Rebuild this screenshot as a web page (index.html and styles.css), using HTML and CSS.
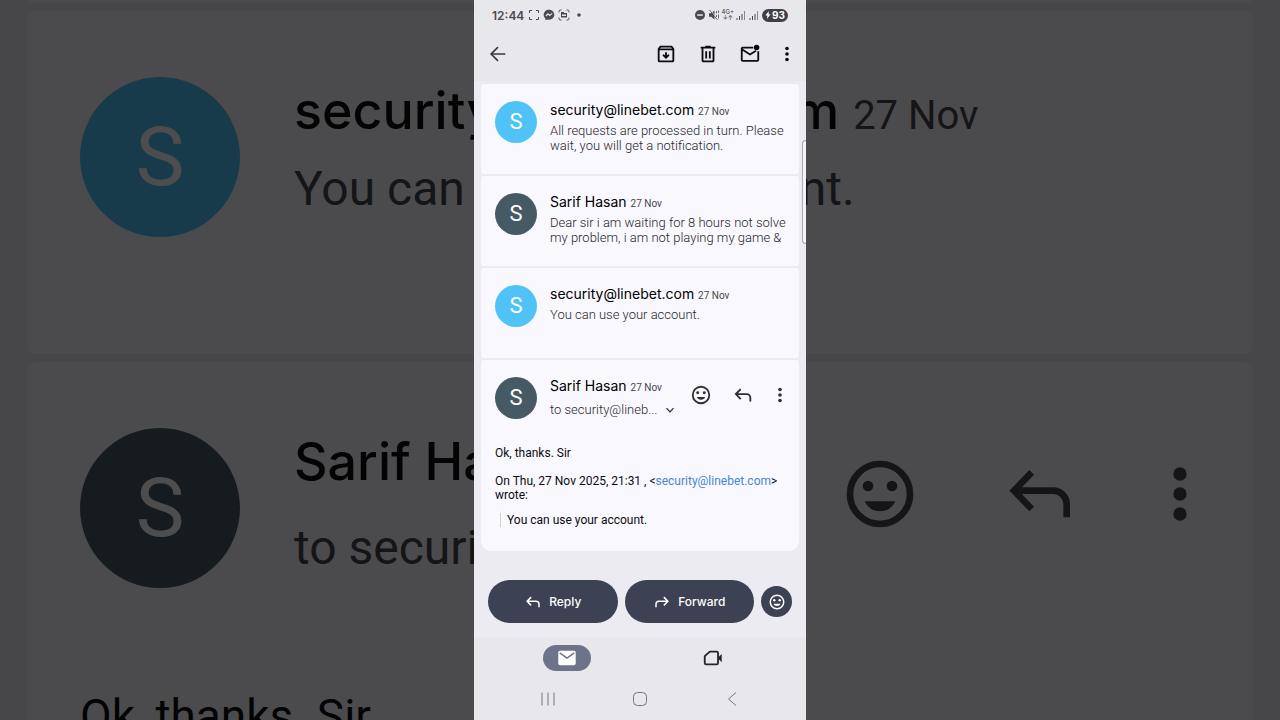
FILE: index.html
```html
<!DOCTYPE html>
<html lang="en">
<head>
  <meta charset="UTF-8" />
  <meta name="viewport" content="width=device-width, initial-scale=1.0" />
  <title>Mail | Conversation</title>
  <link rel="stylesheet" href="styles.css">
</head>

<body>
  <!-- shared icons -->
  <svg class="icon-defs" aria-hidden="true">
    <symbol id="icon-smile" viewBox="0 0 24 24">
      <circle cx="12" cy="12" r="9" fill="none" stroke="currentColor" stroke-width="2" />
      <circle cx="8.4" cy="9.6" r="1.6" />
      <circle cx="15.6" cy="9.6" r="1.6" />
      <path d="M7.4 14.2h9.200c-.8 1.900-2.500 3-4.600 3s-3.800-1.100-4.600-3z" />
    </symbol>
    <symbol id="icon-reply" viewBox="0 0 24 24">
      <path d="M9.500 5.500 4.200 11l5.300 5.500M4.500 11H16a4 4 0 0 1 4 4v4" fill="none" stroke="currentColor" stroke-width="2" />
    </symbol>
    <symbol id="icon-more" viewBox="0 0 12 24">
      <circle cx="6" cy="6" r="2" />
      <circle cx="6" cy="12" r="2" />
      <circle cx="6" cy="18" r="2" />
    </symbol>
    <symbol id="icon-signal" viewBox="0 0 10 10">
      <path d="M0 8h1v2H0zM2.500 6h1v4h-1zM5 4h1v6H5z" />
      <path d="M7.500 1h1v9h-1z" opacity=".6" />
    </symbol>
  </svg>

  <div class="backdrop" aria-hidden="true">
    <div class="big-card big-card-cut"></div>
    <div class="big-card">
      <div class="big-avatar sky">S</div>
      <div class="big-text">
        <div class="big-name">security@linebet.com <span class="big-date">27 Nov</span></div>
        <div class="big-snippet">You can use your account.</div>
      </div>
    </div>
    <div class="big-card big-card-open">
      <div class="big-avatar slate">S</div>
      <div class="big-text">
        <div class="big-name">Sarif Hasan</div>
        <div class="big-snippet big-to">to security@lineb...</div>
      </div>
      <div class="big-actions">
        <svg class="big-icon"><use href="#icon-smile" /></svg>
        <svg class="big-icon"><use href="#icon-reply" /></svg>
        <svg class="big-icon big-more"><use href="#icon-more" /></svg>
      </div>
      <div class="big-body">Ok, thanks. Sir</div>
    </div>
  </div>

  <div class="phone">
    <header class="top">
      <div class="status-bar">
        <span class="clock">12:44</span>
        <svg class="status-icon" viewBox="0 0 12 12">
          <path d="M1.500 4V1.500H4M8 1.500h2.500V4M10.500 8v2.500H8M4 10.500H1.500V8" fill="none" stroke="currentColor" stroke-width="1" />
        </svg>
        <svg class="status-icon" viewBox="0 0 12 12">
          <path d="M6 .8C3 .8.700 2.900.700 5.800c0 1.600.600 2.800 1.700 3.700v1.800l1.700-.9c.6.200 1.200.3 1.900.3 3 0 5.300-2.100 5.300-4.900S9 .8 6 .8z" />
          <path d="M2.800 7.200 5 4.900l1.700 1.500 2.500-2" fill="none" stroke="#e8e7ec" stroke-width="1.200" />
        </svg>
        <svg class="status-icon" viewBox="0 0 12 12">
          <path d="M1 3.500V2.500A1.500 1.500 0 0 1 2.500 1h1M8.500 1h1A1.500 1.500 0 0 1 11 2.500v1M11 8.500v1A1.500 1.500 0 0 1 9.500 11h-1M3.500 11h-1A1.500 1.500 0 0 1 1 9.500v-1" fill="none" stroke="currentColor" />
          <path d="M3 4h6v4.500H3zM3 3h3v1H3z" />
          <path d="M4 5.500h4v1.500H4z" fill="#e8e7ec" />
        </svg>
        <svg class="status-icon" viewBox="0 0 12 12"><circle cx="6" cy="6" r="1.800" /></svg>

        <div class="status-right">
          <svg class="status-icon" viewBox="0 0 12 12">
            <circle cx="6" cy="6" r="5" />
            <path d="M3.200 5.300h5.600v1.500H3.200z" fill="#e8e7ec" />
          </svg>
          <svg class="status-icon" viewBox="0 0 12 12">
            <path d="M1 4.200h2L6.500 1.500v9L3 7.800H1z" />
            <path d="M2.200 1l8 10" stroke="#e8e7ec" />
            <path d="M1.500 1l8 10M8.500 2v2.500M8.500 6v2M10.500 1.500V4M10.500 5.500v4" fill="none" stroke="currentColor" stroke-width=".8" />
          </svg>
          <span class="network">4G+<span class="arrows">↓↑</span></span>
          <svg class="signal"><use href="#icon-signal" /></svg>
          <svg class="signal"><use href="#icon-signal" /></svg>
          <span class="battery">
            <svg class="bolt" viewBox="0 0 6 8"><path d="M3.800 0 .4 4.600h2L2 8l3.600-4.800h-2z" /></svg>93
          </span>
        </div>
      </div>

      <div class="toolbar">
        <button class="icon-button back" aria-label="Back">
          <svg viewBox="0 0 24 24"><path d="M12 4.500 4.500 12l7.500 7.500M4.500 12H20" fill="none" stroke="currentColor" stroke-width="1.800" /></svg>
        </button>
        <div class="toolbar-actions">
          <button class="icon-button" aria-label="Archive">
            <svg viewBox="0 0 24 24">
              <path d="M4 7.500V19a1 1 0 0 0 1 1h14a1 1 0 0 0 1-1V6.500L18.200 4H5.800L4 6.500z" fill="none" stroke="currentColor" stroke-width="2" stroke-linejoin="round" />
              <path d="M4 6h16v2H4zM11 10h2v3.500l1.500-1.400 1.400 1.400L12 17.400l-3.900-3.900 1.400-1.400 1.500 1.400z" />
            </svg>
          </button>
          <button class="icon-button" aria-label="Delete">
            <svg viewBox="0 0 24 24">
              <path d="M6 6v13a1 1 0 0 0 1 1h10a1 1 0 0 0 1-1V6M4 5h16M10 9v8M14 9v8" fill="none" stroke="currentColor" stroke-width="2" />
              <path d="M9 3h6v2H9z" />
            </svg>
          </button>
          <button class="icon-button" aria-label="Mark as unread">
            <svg viewBox="0 0 24 24">
              <path d="M15.500 5H4a1 1 0 0 0-1 1v12.500a1 1 0 0 0 1 1h16a1 1 0 0 0 1-1V9M3.500 7l8.500 5.500 6.500-4" fill="none" stroke="currentColor" stroke-width="2" />
              <circle cx="19.200" cy="5" r="3" />
            </svg>
          </button>
          <button class="icon-button narrow" aria-label="More options"><svg><use href="#icon-more" /></svg></button>
        </div>
      </div>
    </header>

    <main class="thread">
      <article class="message">
        <div class="avatar sky">S</div>
        <div class="summary">
          <div class="sender">security@linebet.com <span class="date">27 Nov</span></div>
          <p class="snippet">All requests are processed in turn. Please wait, you will get a notification.</p>
        </div>
      </article>

      <article class="message">
        <div class="avatar slate">S</div>
        <div class="summary">
          <div class="sender">Sarif Hasan <span class="date">27 Nov</span></div>
          <p class="snippet">Dear sir i am waiting for 8 hours not solve my problem, i am not playing my game &amp;</p>
        </div>
      </article>

      <article class="message">
        <div class="avatar sky">S</div>
        <div class="summary">
          <div class="sender">security@linebet.com <span class="date">27 Nov</span></div>
          <p class="snippet">You can use your account.</p>
        </div>
      </article>

      <article class="message open">
        <div class="avatar slate">S</div>
        <div class="summary">
          <div class="sender">Sarif Hasan <span class="date">27 Nov</span></div>
          <button class="recipient">
            to security@lineb...
            <svg class="chevron" viewBox="0 0 10 10"><path d="M1.500 3.200 5 6.800l3.500-3.600" fill="none" stroke="currentColor" stroke-width="1.200" /></svg>
          </button>
        </div>
        <div class="message-actions">
          <button class="icon-button" aria-label="Add reaction"><svg><use href="#icon-smile" /></svg></button>
          <button class="icon-button" aria-label="Reply"><svg><use href="#icon-reply" /></svg></button>
          <button class="icon-button narrow" aria-label="More"><svg><use href="#icon-more" /></svg></button>
        </div>
        <div class="mail-body">
          <p>Ok, thanks. Sir</p>
          <p>On Thu, 27 Nov 2025, 21:31 , &lt;<a href="mailto:security@linebet.com">security@linebet.com</a>&gt; wrote:</p>
          <blockquote>You can use your account.</blockquote>
        </div>
      </article>
    </main>

    <div class="reply-bar">
      <button class="pill-button"><svg><use href="#icon-reply" /></svg>Reply</button>
      <button class="pill-button"><svg class="flip"><use href="#icon-reply" /></svg>Forward</button>
      <button class="round-button" aria-label="Add reaction"><svg><use href="#icon-smile" /></svg></button>
    </div>

    <footer class="bottom">
      <nav class="tabs">
        <a href="#mail" class="tab active" aria-label="Mail">
          <svg viewBox="0 0 24 24">
            <rect x="2.500" y="4" width="19" height="16" rx="2" />
            <path d="M4 6.500l8 5.500 8-5.500" fill="none" stroke="#6d7389" stroke-width="1.600" />
          </svg>
        </a>
        <a href="#meet" class="tab" aria-label="Meet">
          <svg viewBox="0 0 24 24">
            <path d="M8.500 5H16a1.500 1.500 0 0 1 1.500 1.500v11a1.500 1.500 0 0 1-1.500 1.500H4.500A1.500 1.500 0 0 1 3 17.500V10z" fill="none" stroke="currentColor" stroke-width="2" stroke-linejoin="round" />
            <path d="M17.500 11.500 21.500 7.500v9l-4-4z" />
          </svg>
        </a>
      </nav>
      <div class="system-nav">
        <button aria-label="Recent apps"><svg viewBox="0 0 16 16"><path d="M2 1.500v13M8 1.500v13M14 1.500v13" /></svg></button>
        <button aria-label="Home"><svg viewBox="0 0 16 16"><rect x="1.500" y="1.500" width="13" height="13" rx="4" /></svg></button>
        <button aria-label="Back"><svg viewBox="0 0 16 16"><path d="M12 1.500 4.500 8l7.500 6.500" /></svg></button>
      </div>
    </footer>

    <div class="edge-handle"></div>
  </div>
</body>
</html>
```

FILE: styles.css
```css
:root {
  --bar-bg: #e8e7ec;
  --page-bg: #ecebf1;
  --card-bg: #f9f8fe;
  --text: #0c0c10;
  --muted: #47474d;
  --sky: #4fc3f7;
  --slate: #455a64;
  --button-bg: #3c4153;
}

* {
  box-sizing: border-box;
}

body {
  margin: 0;
  min-height: 100vh;
  display: flex;
  justify-content: center;
  position: relative;
  overflow: hidden;
  background: #000;
  color: var(--text);
  font-family: Inter, Roboto, sans-serif;
}

button {
  padding: 0;
  border: none;
  background: none;
  color: inherit;
  font-family: inherit;
  cursor: pointer;
}

svg {
  display: block;
  fill: currentColor;
}

.icon-defs {
  position: absolute;
  width: 0;
  height: 0;
}

.sky {
  background: var(--sky);
}

.slate {
  background: var(--slate);
}

/* enlarged, dimmed thread behind the phone */
.backdrop {
  position: absolute;
  inset: 0;
  overflow: hidden;
  padding: 0 27px;
  display: flex;
  flex-direction: column;
  gap: 8px;
  background: var(--page-bg);
  opacity: 0.3;
}

.big-card {
  flex: none;
  display: flex;
  flex-wrap: wrap;
  align-items: flex-start;
  gap: 0 54px;
  height: 343px;
  padding: 66px 53px 0;
  background: var(--card-bg);
  border-radius: 8px;
}

.big-card-cut {
  height: 3px;
  padding: 0;
  border-radius: 0;
}

.big-card-open {
  height: auto;
}

.big-avatar {
  width: 160px;
  height: 160px;
  border-radius: 50%;
  color: #fff;
  font-family: Roboto, sans-serif;
  font-size: 82px;
  line-height: 160px;
  text-align: center;
}

.big-text {
  flex: 1;
  white-space: nowrap;
}

.big-name {
  font-size: 52px;
  font-weight: 500;
  line-height: 68px;
}

.big-date {
  color: var(--muted);
  font-family: Roboto, sans-serif;
  font-size: 40px;
  font-weight: 400;
}

.big-snippet {
  margin-top: 9px;
  font-family: Roboto, sans-serif;
  font-size: 48px;
  line-height: 60px;
  color: var(--muted);
}

.big-to {
  margin-top: 22px;
}

.big-actions {
  display: flex;
  gap: 80px;
  margin-top: 26px;
  color: var(--muted);
}

.big-icon {
  width: 80px;
  height: 80px;
}

.big-more {
  width: 40px;
}

.big-body {
  width: 100%;
  margin-top: 98px;
  font-family: Roboto, sans-serif;
  font-size: 46px;
  line-height: 60px;
}

/* phone */
.phone {
  position: relative;
  width: 100%;
  max-width: 332px;
  min-height: 100vh;
  display: flex;
  flex-direction: column;
  background: var(--page-bg);
}

.top {
  padding-bottom: 3px;
  background: var(--bar-bg);
}

.status-bar {
  display: flex;
  align-items: center;
  gap: 3px;
  height: 30px;
  padding: 0 18px;
  color: #4a4a50;
}

.clock {
  margin-right: 1px;
  font-size: 12px;
  font-weight: 600;
}

.status-icon {
  width: 12px;
  height: 12px;
}

.status-right {
  display: flex;
  align-items: center;
  gap: 2px;
  margin-left: auto;
}

.network {
  font-size: 6px;
  font-weight: 500;
  line-height: 6px;
  text-align: center;
}

.arrows {
  display: block;
}

.signal {
  width: 11px;
  height: 10px;
}

.battery {
  display: flex;
  align-items: center;
  gap: 1px;
  height: 13px;
  padding: 0 3px;
  border-radius: 7px;
  background: #3f3f44;
  color: #fff;
  font-size: 10px;
  font-weight: 700;
}

.bolt {
  width: 6px;
  height: 8px;
}

.toolbar,
.toolbar-actions,
.message-actions {
  display: flex;
  align-items: center;
}

.toolbar {
  justify-content: space-between;
  height: 48px;
  padding: 0 13px;
}

.toolbar-actions,
.message-actions {
  gap: 20px;
}

.icon-button svg {
  width: 22px;
  height: 22px;
}

.icon-button.narrow svg {
  width: 12px;
}

.icon-button.back {
  color: #38383d;
}

.thread {
  display: flex;
  flex-direction: column;
  gap: 2px;
  padding: 3px 7px 0;
}

.message {
  display: flex;
  flex-wrap: wrap;
  align-items: flex-start;
  gap: 0 13px;
  min-height: 90px;
  padding: 17px 8px 0 14px;
  background: var(--card-bg);
  border-radius: 3px;
}

.message.open {
  padding-bottom: 24px;
  border-radius: 3px 3px 10px 10px;
}

.avatar {
  width: 42px;
  height: 42px;
  border-radius: 50%;
  color: #fff;
  font-family: Roboto, sans-serif;
  font-size: 22px;
  line-height: 42px;
  text-align: center;
}

.summary {
  flex: 1;
  min-width: 0;
}

.sender {
  color: #000;
  font-size: 14px;
  line-height: 18px;
  white-space: nowrap;
}

.date {
  color: var(--muted);
  font-family: Roboto, sans-serif;
  font-size: 10px;
}

.snippet {
  margin: 2px 0 0;
  color: #26262b;
  font-family: Roboto, sans-serif;
  font-size: 13px;
  font-weight: 300;
  line-height: 15px;
}

.recipient {
  display: flex;
  align-items: center;
  gap: 8px;
  margin-top: 5px;
  color: #26262b;
  font-family: Roboto, sans-serif;
  font-size: 13px;
  font-weight: 300;
  line-height: 15px;
  white-space: nowrap;
}

.chevron {
  width: 10px;
  height: 10px;
}

.message-actions {
  margin: 7px 5px 0 0;
  color: #2f2f34;
}

.mail-body {
  width: 100%;
  margin-top: 27px;
  font-family: Roboto, sans-serif;
  font-size: 12px;
  line-height: 14px;
}

.mail-body p {
  margin: 0 0 14px;
}

.mail-body a {
  color: #4487d8;
  text-decoration: none;
}

.mail-body blockquote {
  margin: -3px 0 0 5px;
  padding-left: 6px;
  border-left: 1px solid #d0d0d6;
}

.reply-bar {
  display: flex;
  align-items: center;
  gap: 7px;
  margin-top: auto;
  padding: 28px 14px 14px;
}

.pill-button {
  flex: 1;
  display: flex;
  align-items: center;
  justify-content: center;
  gap: 7px;
  height: 43px;
  border-radius: 22px;
  background: var(--button-bg);
  color: #fff;
  font-size: 12px;
  font-weight: 500;
}

.pill-button svg {
  width: 18px;
  height: 18px;
}

.flip {
  transform: scaleX(-1);
}

.round-button {
  display: grid;
  place-items: center;
  width: 31px;
  height: 31px;
  border-radius: 50%;
  background: var(--button-bg);
  color: #fff;
}

.round-button svg {
  width: 18px;
  height: 18px;
}

.bottom {
  padding-bottom: 13px;
  background: var(--bar-bg);
}

.tabs {
  display: grid;
  grid-template-columns: 1fr 1fr;
  justify-items: center;
  padding: 8px 20px 0;
}

.tab {
  display: grid;
  place-items: center;
  width: 48px;
  height: 26px;
  border-radius: 13px;
  color: #25252a;
}

.tab.active {
  background: #6d7389;
  color: #fff;
}

.tab svg {
  width: 22px;
  height: 22px;
}

.system-nav {
  display: grid;
  grid-template-columns: 1fr 1fr 1fr;
  justify-items: center;
  padding: 20px 28px 0;
  color: #77777d;
}

.system-nav svg {
  width: 16px;
  height: 16px;
  fill: none;
  stroke: currentColor;
}

/* side panel handle on the right screen edge */
.edge-handle {
  position: absolute;
  top: 140px;
  right: 0;
  width: 4px;
  height: 104px;
  border: 1px solid #a9a9b0;
  border-right: none;
  border-radius: 4px 0 0 4px;
  background: #f4f4f8;
}
```
